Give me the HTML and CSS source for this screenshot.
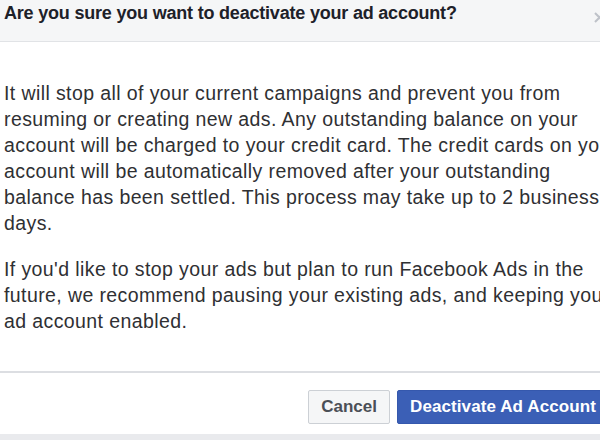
FILE: index.html
```html
<!DOCTYPE html>
<html>
<head>
<meta charset="utf-8">
<link rel="stylesheet" href="styles.css">
</head>
<body>
<div class="dialog">
  <div class="header">
    <h1 class="title">Are you sure you want to deactivate your ad account?</h1>
    <span class="close" aria-label="Close">
      <svg width="11" height="11" viewBox="0 0 11 11"><path d="M1 1 L10 10 M10 1 L1 10" stroke="#bec2c9" stroke-width="2" fill="none"/></svg>
    </span>
  </div>
  <div class="content">
    <p class="para">It will stop all of your current campaigns and prevent you from<br>resuming or creating new ads. Any outstanding balance on your<br>account will be charged to your credit card. The credit cards on your<br>account will be automatically removed after your outstanding<br>balance has been settled. This process may take up to 2 business<br>days.</p>
    <p class="para">If you'd like to stop your ads but plan to run Facebook Ads in the<br>future, we recommend pausing your existing ads, and keeping your<br>ad account enabled.</p>
  </div>
  <div class="footer">
    <button class="btn btn-cancel">Cancel</button>
    <button class="btn btn-primary">Deactivate Ad Account</button>
  </div>
</div>
</body>
</html>
```

FILE: styles.css
```css
html, body {
  margin: 0;
  padding: 0;
}
body {
  width: 600px;
  height: 440px;
  overflow: hidden;
  background: #e9eaed;
  font-family: "Liberation Sans", Arial, sans-serif;
}
.dialog {
  width: 624px;
  background: #fff;
}
.header {
  position: relative;
  height: 41px;
  background: #f5f6f7;
  border-bottom: 1px solid #e1e3e6;
  padding: 0 12px 0 4px;
}
.title {
  margin: 0;
  font-size: 18px;
  line-height: 26px;
  font-weight: bold;
  letter-spacing: -0.2px;
  color: #1d2129;
}
.close {
  position: absolute;
  left: 594px;
  top: 12px;
  line-height: 0;
}
.content {
  padding: 38px 12px 37px 4px;
  overflow: hidden;
}
.para {
  margin: 0 0 20px;
  font-size: 19.5px;
  line-height: 26px;
  letter-spacing: 0.4px;
  white-space: nowrap;
  color: #2f3033;
}
.para:last-child {
  margin-bottom: 0;
}
.footer {
  border-top: 2px solid #dcdee2;
  padding: 17px 15px 10px 4px;
  display: flex;
  justify-content: flex-end;
  gap: 7px;
}
.btn {
  font-family: "Liberation Sans", Arial, sans-serif;
  font-weight: bold;
  font-size: 17px;
  height: 34px;
  border-radius: 2px;
  padding: 0 12px;
  cursor: pointer;
}
.btn-cancel {
  background: #f5f6f7;
  border: 1px solid #ccd0d5;
  color: #4b4f56;
}
.btn-primary {
  background: #3b5fb6;
  border: 1px solid #3558ad;
  color: #fff;
  letter-spacing: 0.1px;
}
```
